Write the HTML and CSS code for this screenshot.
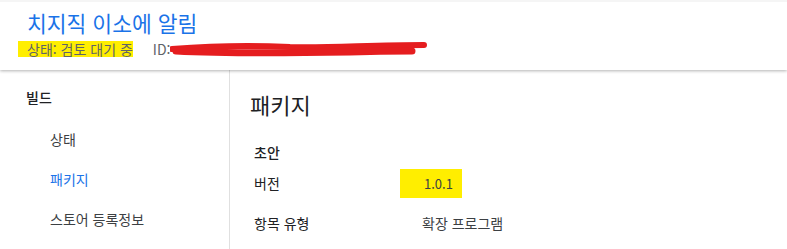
FILE: index.html
```html
<!DOCTYPE html>
<html lang="ko">
<head>
    <meta charset="UTF-8">
    <title>치지직 이소에 알림</title>
    <link rel="stylesheet" href="styles.css">
</head>
<body>
    <!-- 상단 헤더 -->
    <header class="top">
        <h1 class="title">치지직 이소에 알림</h1>
        <div class="meta">
            <span class="mark status">상태: 검토 대기 중</span>
            <span class="item-id">ID:
                <svg class="redact" width="258" height="16" viewBox="0 0 258 16">
                    <path d="M2 8 C40 5 80 4 120 6 C160 7 200 4 254 4" stroke="#e51d1f" stroke-width="6" fill="none" stroke-linecap="round"/>
                    <path d="M6 10 C60 13 120 12 180 11 C210 10 230 10 242 10" stroke="#e51d1f" stroke-width="7" fill="none" stroke-linecap="round"/>
                </svg>
            </span>
        </div>
    </header>

    <div class="layout">
        <!-- 사이드 메뉴 -->
        <nav class="side">
            <div class="side-head">빌드</div>
            <ul>
                <li><a href="#">상태</a></li>
                <li><a href="#" class="active">패키지</a></li>
                <li><a href="#">스토어 등록정보</a></li>
            </ul>
        </nav>

        <!-- 본문 -->
        <main class="content">
            <h2>패키지</h2>
            <h3>초안</h3>
            <div class="row">
                <span class="label">버전</span>
                <span class="value"><span class="mark version">1.0.1</span></span>
            </div>
            <div class="row">
                <span class="label">항목 유형</span>
                <span class="value">확장 프로그램</span>
            </div>
        </main>
    </div>
</body>
</html>
```

FILE: styles.css
```css
* {
    margin: 0;
    padding: 0;
    box-sizing: border-box;
}

body {
    font-family: "Noto Sans CJK KR", "Noto Sans", Roboto, sans-serif;
    background-color: #fff;
    color: #202124;
    border-top: 2px solid #f5f5f5;
    overflow: hidden;
}

/* 헤더 */
.top {
    height: 68px;
    padding: 5px 0 0 27px;
    background-color: #fff;
    box-shadow: 0 1px 3px rgba(0, 0, 0, 0.3);
    position: relative;
    z-index: 2;
}

.title {
    font-size: 21.5px;
    font-weight: 400;
    line-height: 32px;
    color: #1a73e8;
}

.meta {
    display: flex;
    align-items: center;
    font-size: 14px;
    color: #5f6368;
    margin-top: 2px;
}

.mark {
    background-color: #ffee00;
}

.status {
    display: inline-block;
    line-height: 16px;
    margin-left: -9px;
    padding: 0 0 0 9px;
}

.item-id {
    display: inline-block;
    line-height: 16px;
    position: relative;
    margin-left: 20px;
}

.redact {
    position: absolute;
    left: 17px;
    top: 0;
}

/* 본문 레이아웃 */
.layout {
    display: flex;
    height: 179px;
}

.side {
    width: 230px;
    border-right: 1px solid #e0e0e0;
    padding: 18px 0 0 26px;
    font-size: 14px;
}

.side-head {
    font-weight: 500;
    line-height: 18px;
    color: #202124;
}

.side ul {
    list-style: none;
    padding: 13px 0 0 24px;
}

.side li a {
    display: block;
    line-height: 40px;
    text-decoration: none;
    color: #3c4043;
}

.side li a.active {
    color: #1a73e8;
}

.content {
    flex: 1;
    padding: 19px 0 0 20px;
}

h2 {
    font-size: 22px;
    font-weight: 400;
    line-height: 30px;
    color: #202124;
}

h3 {
    font-size: 14px;
    font-weight: 500;
    line-height: 20px;
    margin: 23px 0 0 4px;
}

.row {
    display: flex;
    font-size: 14px;
    line-height: 20px;
    margin: 11px 0 0 4px;
}

.row + .row {
    margin-top: 19px;
}

.label {
    width: 168px;
}

.value {
    color: #3c4043;
}

.version {
    font-size: 13px;
    padding: 5px 9px 5px 24px;
    margin-left: -22px;
}
```
